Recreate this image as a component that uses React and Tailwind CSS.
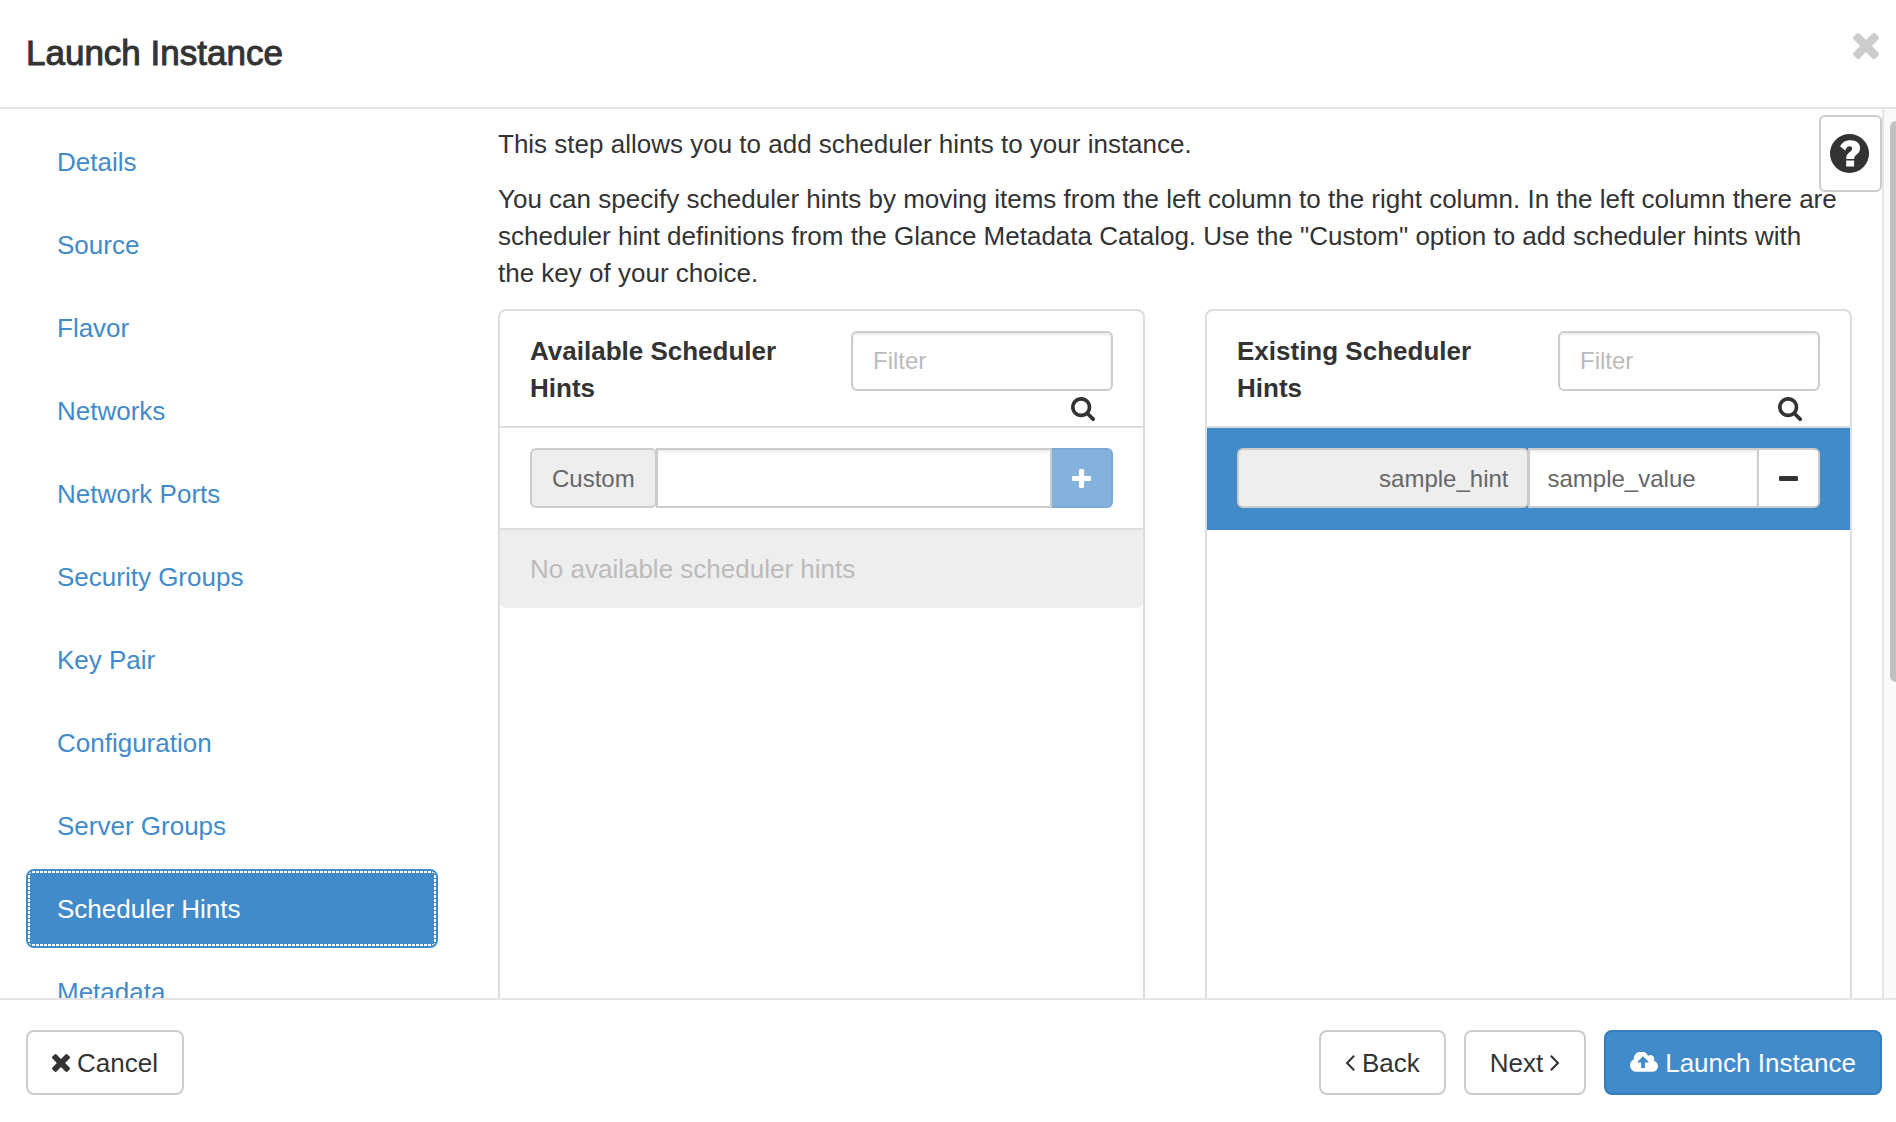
const ICONS = {
  times: {
    box: "302 366 1188 1188",
    d: "M1490 1322q0 40-28 68l-136 136q-28 28-68 28t-68-28l-294-294-294 294q-28 28-68 28t-68-28l-136-136q-28-28-28-68t28-68l294-294-294-294q-28-28-28-68t28-68l136-136q28-28 68-28t68 28l294 294 294-294q28-28 68-28t68 28l136 136q28 28 28 68t-28 68l-294 294 294 294q28 28 28 68z",
  },
  plus: {
    box: "192 128 1408 1408",
    d: "M1600 736v192q0 40-28 68t-68 28h-416v416q0 40-28 68t-68 28h-192q-40 0-68-28t-28-68v-416h-416q-40 0-68-28t-28-68v-192q0-40 28-68t68-28h416v-416q0-40 28-68t68-28h192q40 0 68 28t28 68v416h416q40 0 68 28t28 68z",
  },
  minus: {
    box: "192 128 1408 1408",
    d: "M1600 736v192q0 40-28 68t-68 28h-1216q-40 0-68-28t-28-68v-192q0-40 28-68t68-28h1216q40 0 68 28t28 68z",
  },
  search: {
    box: "64 128 1664 1664",
    d: "M1216 832q0-185-131.5-316.5t-316.5-131.5-316.5 131.5-131.5 316.5 131.5 316.5 316.5 131.5 316.5-131.5 131.5-316.5zm512 832q0 52-38 90t-90 38q-54 0-90-38l-343-342q-179 124-399 124-143 0-273.5-55.5t-225-150-150-225-55.5-273.5 55.5-273.5 150-225 225-150 273.5-55.5 273.5 55.5 225 150 150 225 55.5 273.5q0 220-124 399l343 343q37 37 37 90z",
  },
  question: {
    box: "0 0 118 118",
    d: "M59 0A59 59 0 1 0 59 118A59 59 0 1 0 59 0ZM31 38C36 25 47 19 62 19C80 19 91 28 91 43C91 53 86 58 80 63C75 67 73 70 73 76H49C49 66 52 60 58 56C64 52 67 49 67 44C67 39 64 37 59 37C53 37 50 41 46 50ZM49 80H73V98H49Z",
  },
  cloudUpload: {
    box: "-64 192 1920 1408",
    d: "M1216 864q0-14-9-23l-352-352q-9-9-23-9t-23 9l-351 351q-10 12-10 24 0 14 9 23t23 9h224v352q0 13 9.5 22.5t22.5 9.5h192q13 0 22.5-9.5t9.5-22.5v-352h224q13 0 22.5-9.5t9.5-22.5zm640 288q0 159-112.5 271.5t-271.5 112.5h-1088q-185 0-316.5-131.5t-131.5-316.5q0-130 70-240t188-165q-2-30-2-43 0-212 150-362t362-150q156 0 285.5 87t188.5 231q71-62 166-62 106 0 181 75t75 181q0 76-41 138 130 31 213.5 135.5t83.5 238.5z",
  },
  angleLeft: {
    box: "576 448 640 1024",
    d: "M1203 544q0 13-10 23l-393 393 393 393q10 10 10 23t-10 23l-50 50q-10 10-23 10t-23-10l-466-466q-10-10-10-23t10-23l466-466q10-10 23-10t23 10l50 50q10 10 10 23z",
  },
  angleRight: {
    box: "576 448 640 1024",
    d: "M1171 960q0 13-10 23l-466 466q-10 10-23 10t-23-10l-50-50q-10-10-10-23t10-23l393-393-393-393q-10-10-10-23t10-23l50-50q10-10 23-10t23 10l466 466q10 10 10 23z",
  },
};

function Icon({ name, className }) {
  const icon = ICONS[name];
  return (
    <svg viewBox={icon.box} fill="currentColor" fillRule="evenodd" aria-hidden="true" className={className}>
      <path d={icon.d} />
    </svg>
  );
}

const STEPS = [
  "Details",
  "Source",
  "Flavor",
  "Networks",
  "Network Ports",
  "Security Groups",
  "Key Pair",
  "Configuration",
  "Server Groups",
  "Scheduler Hints",
  "Metadata",
];

// Tightly packed white dashes along the inner edge of the focused step.
const FOCUS_RING =
  "[background-image:repeating-linear-gradient(90deg,#fff_0_3px,#428bca_3px_4px),repeating-linear-gradient(90deg,#fff_0_3px,#428bca_3px_4px),repeating-linear-gradient(0deg,#fff_0_3px,#428bca_3px_4px),repeating-linear-gradient(0deg,#fff_0_3px,#428bca_3px_4px)] [background-size:100%_2px,100%_2px,2px_100%,2px_100%] [background-position:top,bottom,left,right] bg-no-repeat";

function StepNav({ active }) {
  return (
    <nav aria-label="Steps" className="pt-[13px]">
      <ul className="flex flex-col gap-1">
        {STEPS.map((step) => (
          <li key={step}>
            <a
              href="#step"
              aria-current={step === active ? "step" : undefined}
              className={
                step === active
                  ? "block rounded-lg border-2 border-[#428bca] bg-[#428bca] px-[29px] pt-5 pb-[18px] text-white " +
                    FOCUS_RING
                  : "block rounded-lg border-2 border-transparent px-[29px] pt-5 pb-[18px] text-[#428bca]"
              }
            >
              {step}
            </a>
          </li>
        ))}
      </ul>
    </nav>
  );
}

function HintPanel({ title, children }) {
  return (
    <section className="min-h-[800px] rounded-lg border-2 border-[#ddd]">
      <header className="flex justify-between border-b-2 border-[#ddd] px-[30px] pt-5 pb-[5px]">
        <h2 className="w-[262px] pt-0.5 font-bold">{title}</h2>
        <div className="flex w-[262px] flex-col">
          <input
            type="text"
            placeholder="Filter"
            aria-label={"Filter " + title}
            className="h-[60px] w-full rounded-md border-2 border-[#ccc] px-5 text-[24px] text-[#555] shadow-[inset_0_2px_2px_rgba(0,0,0,0.075)] placeholder:text-[#bbb]"
          />
          <Icon name="search" className="mt-1.5 mr-[18px] size-6 self-end" />
        </div>
      </header>
      {children}
    </section>
  );
}

function FooterButton({ primary, children }) {
  return (
    <button
      type="button"
      className={
        primary
          ? "flex h-[65px] items-center gap-[7px] rounded-lg border-2 border-[#357ebd] bg-[#428bca] px-6 text-white"
          : "flex h-[65px] items-center gap-[7px] rounded-lg border-2 border-[#ccc] bg-white px-6"
      }
    >
      {children}
    </button>
  );
}

export default function App() {
  return (
    <div
      role="dialog"
      aria-labelledby="dialog-title"
      className="flex h-screen flex-col bg-white font-['Liberation_Sans',Arial,sans-serif] text-[26px] leading-[37px] text-[#333]"
    >
      <header className="flex h-[109px] shrink-0 items-start justify-between border-b-2 border-[#e5e5e5] pr-[17px] pl-[26px]">
        <h1 id="dialog-title" className="pt-[34px] text-[35px] [-webkit-text-stroke:1px_#333]">
          Launch Instance
        </h1>
        <button type="button" aria-label="Close" className="mt-[33px] text-[#ccc]">
          <Icon name="times" className="size-[26px]" />
        </button>
      </header>

      <div className="flex min-h-0 flex-1">
        <main className="relative grid min-w-0 flex-1 grid-cols-[412px_minmax(0,1fr)] gap-x-[60px] overflow-hidden pr-[30px] pl-[26px]">
          <StepNav active="Scheduler Hints" />

          <div className="pt-[17px]">
            <p className="mb-[18px]">This step allows you to add scheduler hints to your instance.</p>
            <p className="mb-[17px] pr-3">
              You can specify scheduler hints by moving items from the left column to the right column. In the left
              column there are scheduler hint definitions from the Glance Metadata Catalog. Use the "Custom" option to
              add scheduler hints with the key of your choice.
            </p>

            <div className="grid grid-cols-2 gap-[60px]">
              <HintPanel title="Available Scheduler Hints">
                <div className="border-b-2 border-[#ddd] px-[30px] py-5">
                  <div className="flex h-[60px]">
                    <label
                      htmlFor="custom-hint"
                      className="flex items-center rounded-md border-2 border-[#ccc] bg-[#eee] px-5 text-[24px] text-[#666]"
                    >
                      Custom
                    </label>
                    <input
                      id="custom-hint"
                      type="text"
                      className="-ml-px min-w-0 flex-1 border-2 border-[#ccc] px-5 text-[24px] text-[#555] shadow-[inset_0_2px_2px_rgba(0,0,0,0.075)]"
                    />
                    <button
                      type="button"
                      aria-label="Add custom hint"
                      className="flex w-[61px] items-center justify-center rounded-r-md border-2 border-l-0 border-[#78a9d6] bg-[#84b2dd] text-white"
                    >
                      <Icon name="plus" className="size-[19px]" />
                    </button>
                  </div>
                </div>
                <p className="rounded-b-md bg-[#eee] px-[30px] pt-[21px] pb-5 text-[#bbb]">
                  No available scheduler hints
                </p>
              </HintPanel>

              <HintPanel title="Existing Scheduler Hints">
                <div className="bg-[#428bca] px-[30px] pt-5 pb-[22px]">
                  <div className="flex h-[60px]">
                    <label
                      htmlFor="sample-hint"
                      className="flex w-1/2 items-center justify-end rounded-md border-2 border-[#ccc] bg-[#eee] px-[18px] text-[24px] text-[#666]"
                    >
                      sample_hint
                    </label>
                    <input
                      id="sample-hint"
                      type="text"
                      defaultValue="sample_value"
                      className="-ml-px min-w-0 flex-1 border-2 border-r-0 border-[#ccc] bg-white px-[18px] text-[24px] text-[#666] shadow-[inset_0_2px_2px_rgba(0,0,0,0.075)]"
                    />
                    <button
                      type="button"
                      aria-label="Remove sample_hint"
                      className="flex w-[63px] items-center justify-center rounded-r-md border-2 border-[#ccc] bg-white"
                    >
                      <Icon name="minus" className="size-[19px]" />
                    </button>
                  </div>
                </div>
              </HintPanel>
            </div>
          </div>

          <button
            type="button"
            aria-label="Help"
            className="absolute top-1.5 right-0 flex h-[77px] w-[63px] items-center justify-center rounded-md border-2 border-[#ccc] pr-0.5"
          >
            <Icon name="question" className="size-[39px]" />
          </button>
        </main>

        <div aria-hidden="true" className="w-3.5 shrink-0 overflow-hidden border-l-2 border-[#e5e5e5] bg-[#fafafa] pt-3 pl-1.5">
          <div className="h-[64%] rounded-l-md bg-[#c1c1c1]" />
        </div>
      </div>

      <footer className="flex h-[124px] shrink-0 items-start justify-between border-t-2 border-[#e5e5e5] pt-[30px] pr-3.5 pl-[26px]">
        <FooterButton>
          <Icon name="times" className="size-[18px]" />
          <span className="pt-px">Cancel</span>
        </FooterButton>
        <div className="flex gap-[18px]">
          <FooterButton>
            <Icon name="angleLeft" className="h-4 w-2.5" />
            <span className="pt-px">Back</span>
          </FooterButton>
          <FooterButton>
            <span className="pt-px">Next</span>
            <Icon name="angleRight" className="h-4 w-2.5" />
          </FooterButton>
          <FooterButton primary>
            <Icon name="cloudUpload" className="h-[21px] w-7" />
            <span className="pt-px">Launch Instance</span>
          </FooterButton>
        </div>
      </footer>
    </div>
  );
}
